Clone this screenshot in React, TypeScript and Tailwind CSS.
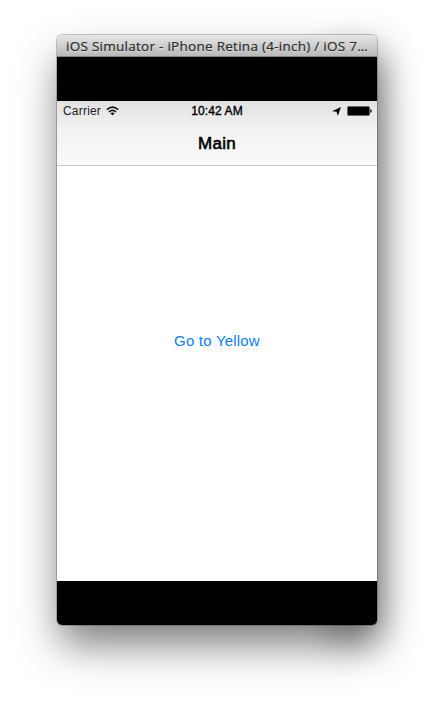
function WifiIcon() {
  return (
    <svg width="13" height="10" viewBox="0 0 13 10" fill="none" stroke="#111" strokeWidth="1.6">
      <path d="M.8 3.7Q6.5-1.4 12.2 3.7" />
      <path d="M2.9 6Q6.5 2.8 10.1 6" />
      <path d="M6.5 9.4 4.4 7.3Q6.5 5.7 8.6 7.3Z" fill="#111" stroke="none" />
    </svg>
  );
}

function LocationIcon() {
  return (
    <svg width="9" height="9" viewBox="0 0 9 9" fill="#050505">
      <path d="M9 0 5.8 9 4.6 4.8 0 4.2Z" />
    </svg>
  );
}

function BatteryIcon() {
  return (
    <svg width="25" height="10" viewBox="0 0 25 10">
      <rect x=".5" y=".5" width="22" height="9" rx="1.2" fill="#000" stroke="#666" />
      <path d="M23.2 3v4Q24.8 6.5 24.8 5T23.2 3Z" fill="#111" />
    </svg>
  );
}

export default function App() {
  return (
    <div className="relative isolate h-[704px] w-[434px] overflow-hidden bg-white px-[57px] pt-[35px]">
      <div className="absolute top-[50px] left-[333px] -z-10 h-[588px] w-[48px] bg-black/35 blur-[18px]" />
      <div className="flex h-[590px] w-[320px] flex-col overflow-hidden rounded-[5px] shadow-[0_0_0_1px_rgba(0,0,0,0.22),0_22px_42px_-3px_rgba(0,0,0,0.52)]">
        <header className="flex h-[22px] shrink-0 items-center justify-center border-t border-b border-t-[#e6e6e6] border-b-[#858585] bg-linear-to-b from-[#e4e4e4] to-[#b9b9b9]">
          <h1 className="font-['Open_Sans','Noto_Sans',sans-serif] text-[13.5px] leading-5 font-medium tracking-[0.27px] whitespace-nowrap text-[#2c2c2c] [-webkit-text-stroke:0.2px_#2c2c2c] [text-shadow:0_1px_0_rgba(255,255,255,0.4)]">
            iOS Simulator - iPhone Retina (4-inch) / iOS 7…
          </h1>
        </header>
        <div className="h-11 shrink-0 bg-black" />
        <div className="flex h-[480px] shrink-0 flex-col bg-white font-['Liberation_Sans',Arial,sans-serif]">
          <nav className="h-[65px] shrink-0 border-b border-[#cacaca] bg-linear-to-b from-[#e2e1e2] via-[#f3f3f3] via-45% to-[#f9f9f9]">
            <div className="grid h-5 grid-cols-3 items-center pr-[5px] pl-[6px] text-[12px] leading-5">
              <div className="flex items-center gap-[5px] text-[#222]">
                <span className="tracking-[0.2px]">Carrier</span>
                <WifiIcon />
              </div>
              <span className="-ml-px text-center tracking-[0.1px] text-black [-webkit-text-stroke:0.35px_black]">10:42 AM</span>
              <div className="flex items-center justify-end gap-[6px]">
                <LocationIcon />
                <BatteryIcon />
              </div>
            </div>
            <h2 className="pt-[11px] text-center text-[17px] leading-[23px] tracking-[0.3px] text-black [-webkit-text-stroke:0.6px_black]">Main</h2>
          </nav>
          <main className="flex flex-1 justify-center pt-[164px]">
            <button className="h-[22px] text-[15px] leading-[22px] tracking-[0.2px] text-[#087ffb]">Go to Yellow</button>
          </main>
        </div>
        <div className="h-11 shrink-0 bg-black" />
      </div>
    </div>
  );
}
